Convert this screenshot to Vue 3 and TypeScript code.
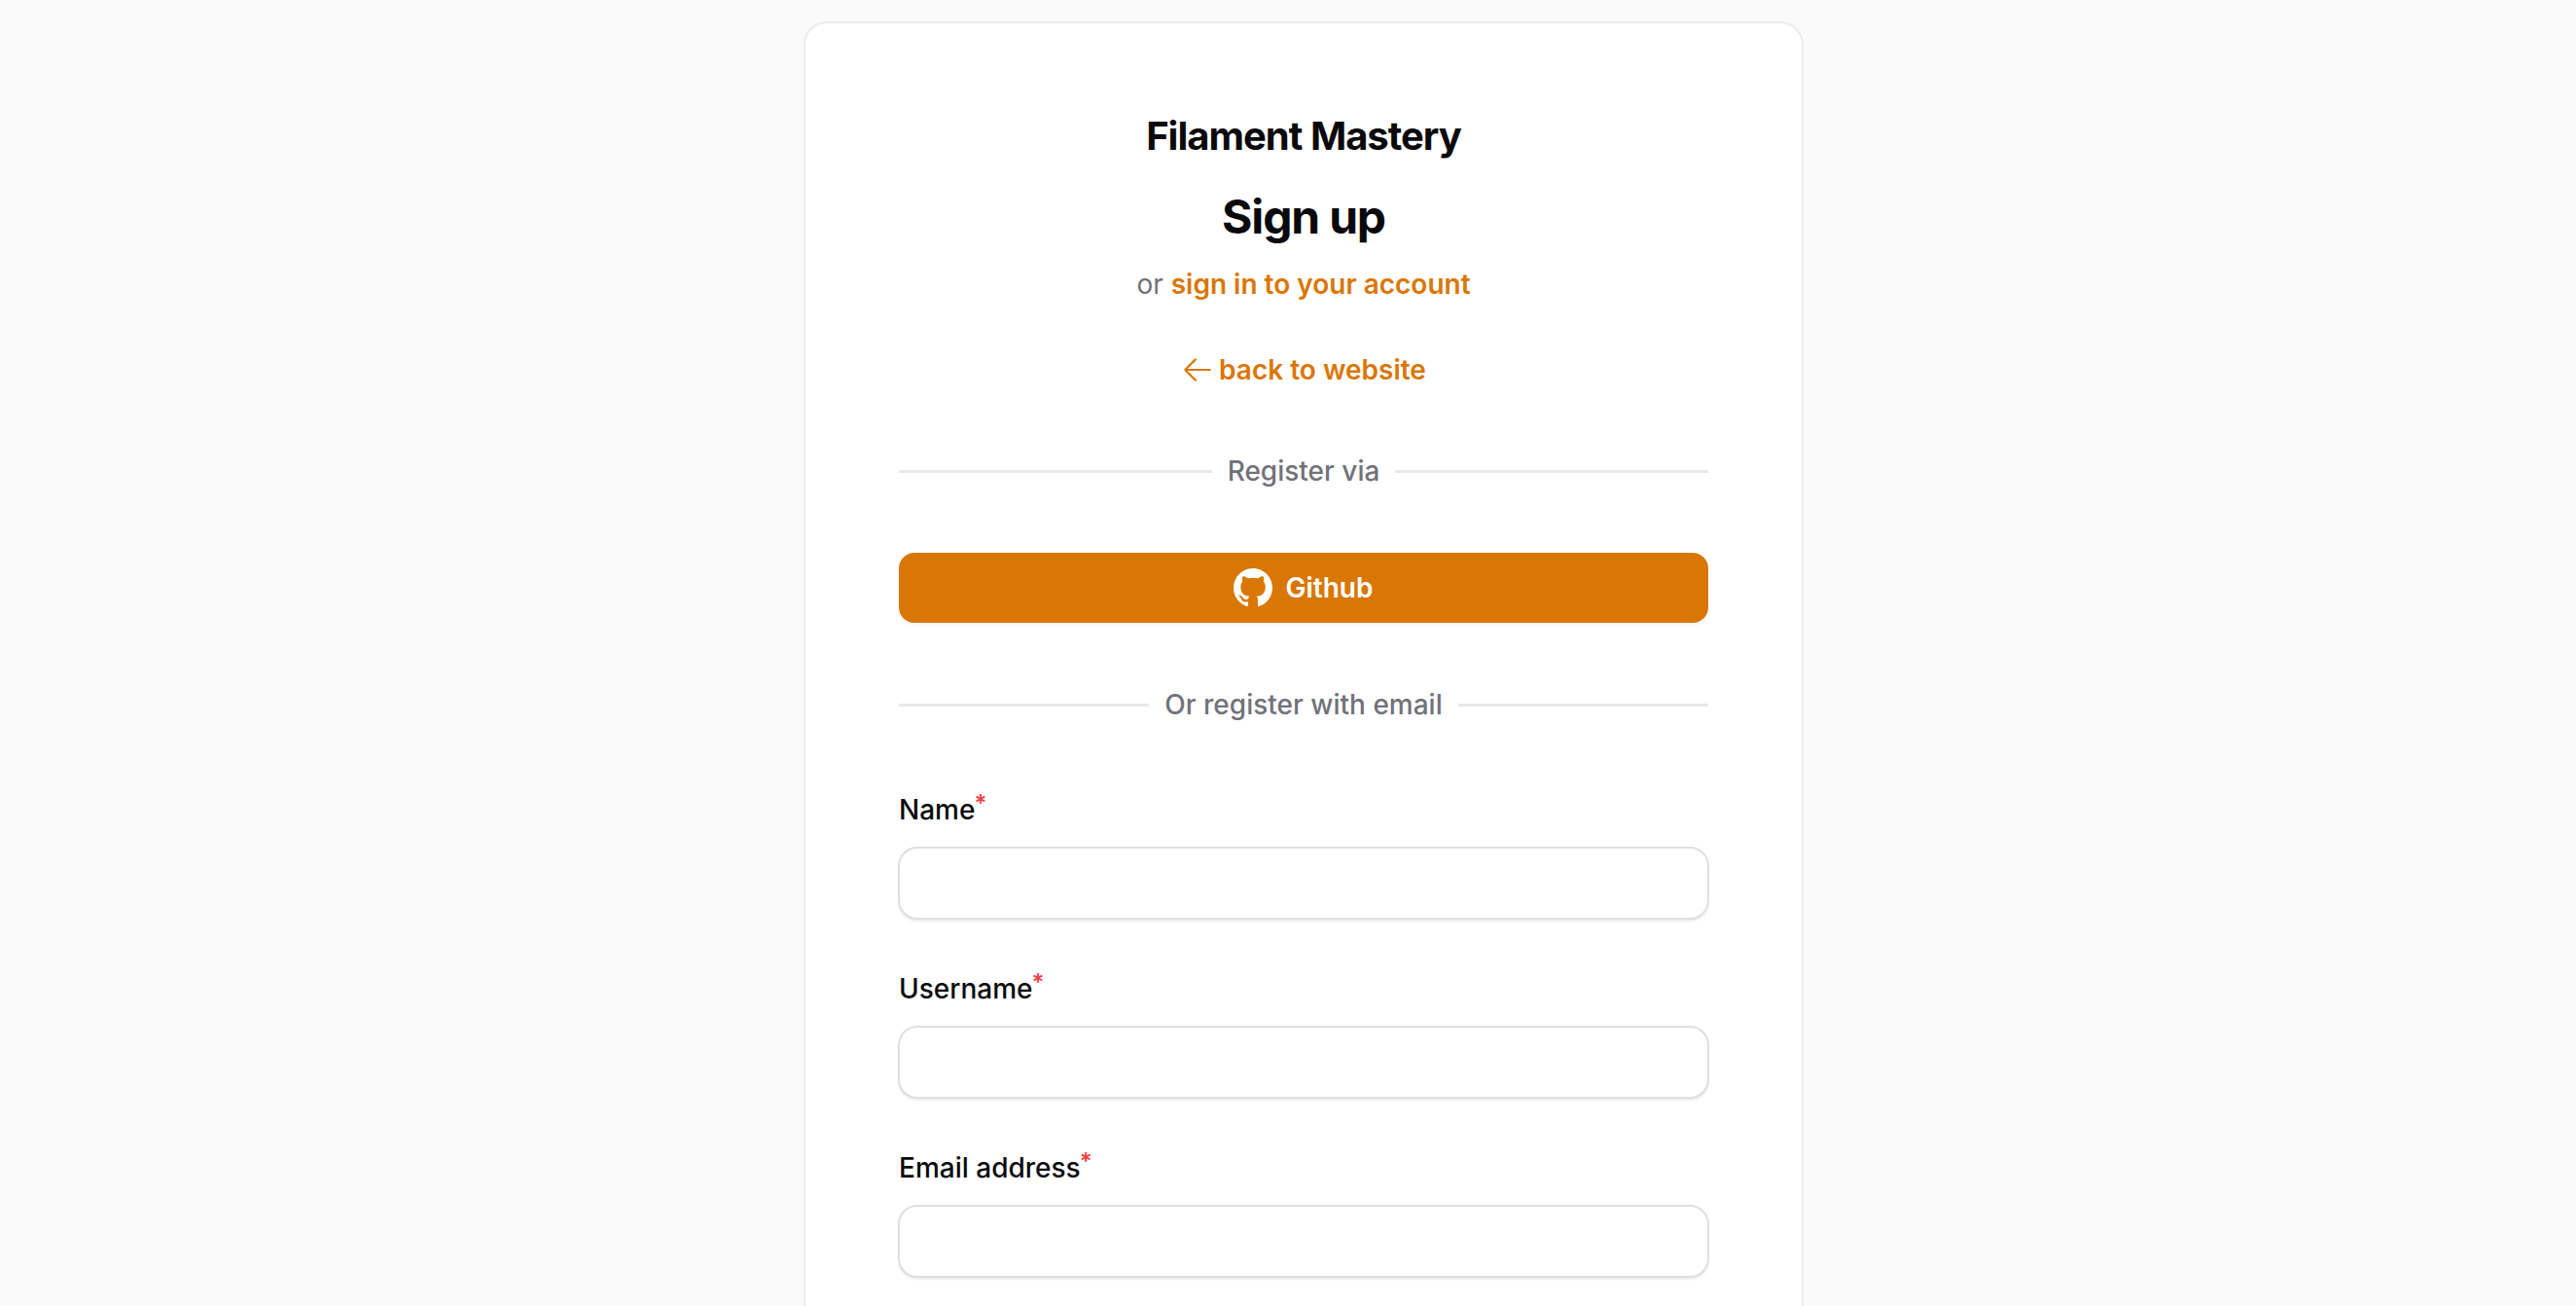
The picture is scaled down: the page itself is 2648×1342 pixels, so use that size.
<script setup lang="ts">
const fields = ['Name', 'Username', 'Email address']
</script>

<template>
  <main class="page">
    <section class="card">
      <header class="head">
        <div class="brand">Filament Mastery</div>
        <h1>Sign up</h1>
        <p class="sub">or <a href="#">sign in to your account</a></p>
        <a class="back" href="#">
          <svg viewBox="0 0 24 24" fill="none" stroke="currentColor" stroke-width="1.5" stroke-linecap="round" stroke-linejoin="round">
            <path d="M10.5 19.5 3 12m0 0 7.5-7.5M3 12h18" />
          </svg>
          <span>back to website</span>
        </a>
      </header>

      <div class="divider"><span>Register via</span></div>

      <button class="github" type="button">
        <svg viewBox="0 0 16 16" fill="currentColor">
          <path d="M8 0C3.58 0 0 3.58 0 8c0 3.54 2.29 6.53 5.47 7.59.4.07.55-.17.55-.38 0-.19-.01-.82-.01-1.49-2.01.37-2.53-.49-2.69-.94-.09-.23-.48-.94-.82-1.13-.28-.15-.68-.52-.01-.53.63-.01 1.08.58 1.23.82.72 1.21 1.87.87 2.33.66.07-.52.28-.87.51-1.07-1.78-.2-3.64-.89-3.64-3.95 0-.87.31-1.59.82-2.15-.08-.2-.36-1.02.08-2.12 0 0 .67-.21 2.2.82.64-.18 1.32-.27 2-.27.68 0 1.36.09 2 .27 1.53-1.04 2.2-.82 2.2-.82.44 1.1.16 1.92.08 2.12.51.56.82 1.27.82 2.15 0 3.07-1.87 3.75-3.65 3.95.29.25.54.73.54 1.48 0 1.07-.01 1.93-.01 2.2 0 .21.15.46.55.38A8.013 8.013 0 0016 8c0-4.42-3.58-8-8-8z" />
        </svg>
        <span>Github</span>
      </button>

      <div class="divider"><span>Or register with email</span></div>

      <form class="form" @submit.prevent>
        <div v-for="field in fields" :key="field" class="field">
          <label>{{ field }}<sup>*</sup></label>
          <input type="text" />
        </div>
      </form>
    </section>
  </main>
</template>

<style>
html,
body {
  margin: 0;
  background: #fafafa;
}
</style>

<style scoped>
.page {
  box-sizing: border-box;
  height: 100vh;
  overflow: hidden;
  display: flex;
  justify-content: center;
  padding: 22px 0 0 32px;
  background: #fafafa;
  font-family: Inter, "Liberation Sans", sans-serif;
  color: #09090b;
}

.card {
  box-sizing: border-box;
  width: 1028px;
  min-height: 1500px;
  padding: 88px 96px;
  background: #fff;
  border: 2px solid #ececee;
  border-radius: 24px;
}

.head {
  display: flex;
  flex-direction: column;
  align-items: center;
}

.brand {
  font-size: 40px;
  line-height: 56px;
  font-weight: 700;
  letter-spacing: -1px;
}

h1 {
  margin: 23px 0 0;
  font-size: 48px;
  line-height: 64px;
  font-weight: 700;
  letter-spacing: -1.2px;
}

.sub {
  margin: 17px 0 0;
  font-size: 28px;
  line-height: 40px;
  color: #71717a;
}

a {
  color: #d97706;
  font-weight: 600;
  text-decoration: none;
}

.back {
  display: flex;
  align-items: center;
  gap: 5px;
  margin-top: 48px;
  font-size: 28px;
  line-height: 40px;
}

.back svg {
  width: 34px;
  height: 34px;
}

.divider {
  display: flex;
  align-items: center;
  gap: 16px;
  margin-top: 64px;
  font-size: 28px;
  line-height: 40px;
  font-weight: 500;
  color: #71717a;
}

.divider::before,
.divider::after {
  content: "";
  flex: 1;
  height: 3px;
  background: #e8e8ea;
}

.github {
  display: flex;
  align-items: center;
  justify-content: center;
  gap: 13px;
  width: 100%;
  height: 72px;
  margin-top: 64px;
  padding: 0;
  border: 0;
  border-radius: 16px;
  background: #d97706;
  color: #fff;
  font-family: inherit;
  font-size: 28px;
  font-weight: 600;
  box-shadow: 0 2px 4px rgba(0, 0, 0, 0.05);
}

.github svg {
  width: 40px;
  height: 40px;
}

.form {
  display: flex;
  flex-direction: column;
  gap: 51px;
  margin-top: 68px;
}

.field {
  display: flex;
  flex-direction: column;
  gap: 18px;
}

label {
  font-size: 28px;
  line-height: 40px;
  font-weight: 500;
  color: #09090b;
}

sup {
  margin-left: -1px;
  font-size: 24px;
  font-weight: 600;
  line-height: 0;
  color: #ef4444;
  position: relative;
  top: 2px;
}

input {
  box-sizing: border-box;
  width: 834px;
  height: 75px;
  margin: 0 -1px;
  border: 2px solid #dfdfe2;
  border-radius: 20px;
  background: #fff;
  outline: none;
  box-shadow: 0 2px 2px rgba(0, 0, 0, 0.07);
}
</style>
